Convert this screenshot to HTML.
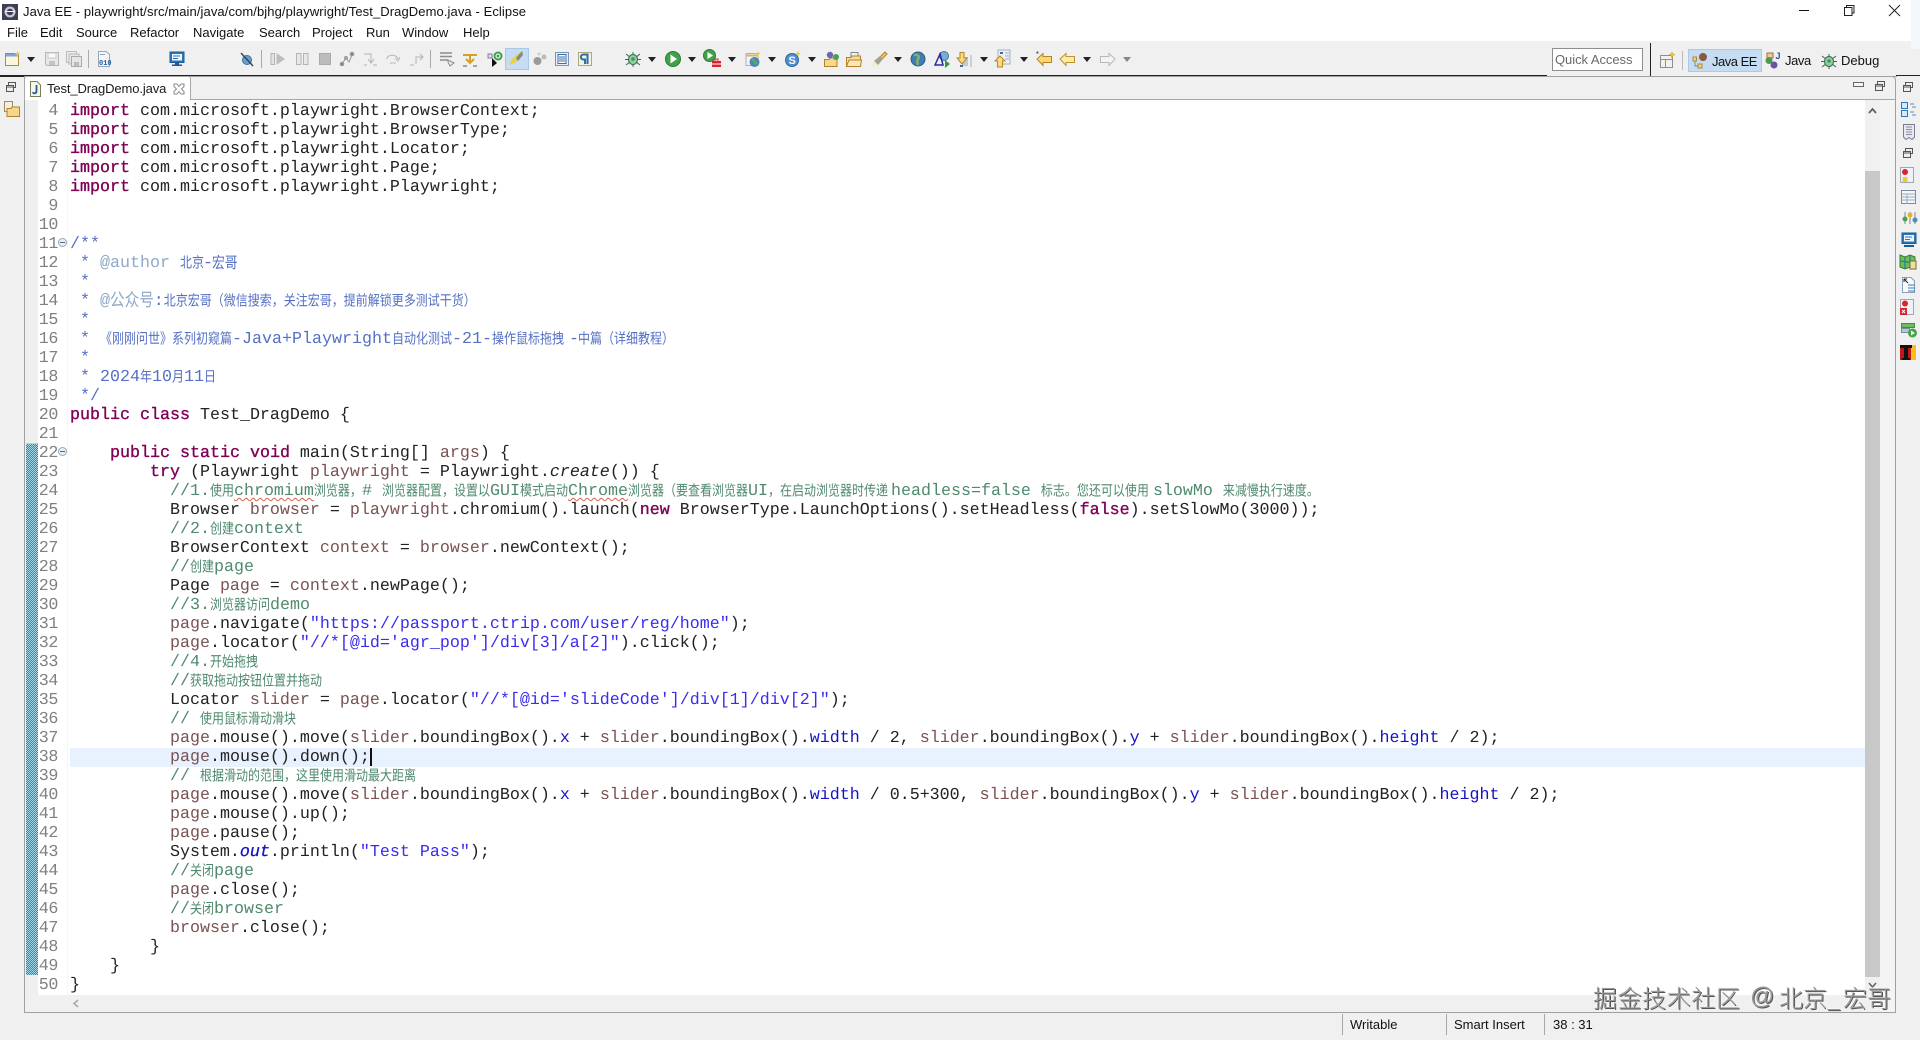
<!DOCTYPE html>
<html lang="zh"><head><meta charset="utf-8"><title>Java EE - Eclipse</title>
<style>
html,body{margin:0;padding:0;width:1920px;height:1040px;overflow:hidden;background:#f0f0f0;font-family:"Liberation Sans","Noto Sans CJK SC",sans-serif;font-size:13px;color:#111}
.p{position:absolute}
svg.i{position:absolute;width:16px;height:16px;overflow:visible}
.ar{position:absolute;top:57px;width:0;height:0;border-left:4.5px solid transparent;border-right:4.5px solid transparent;border-top:5px solid #222}
.t{position:absolute;white-space:pre;line-height:16px}
#code{position:absolute;left:70px;top:102px;font:16.67px/19px "Liberation Mono","Noto Sans CJK SC",monospace;color:#222;text-rendering:geometricPrecision}
#code div{height:19px;white-space:pre}
#nums{position:absolute;left:30px;top:102px;width:28px;text-align:right;font:16.67px/19px "Liberation Mono",monospace;color:#808080;letter-spacing:-.4px;text-rendering:geometricPrecision}
#nums div{height:19px}
b{color:#7f0055;font-weight:normal;-webkit-text-stroke:.35px #7f0055}
u{color:#7a5252;text-decoration:none}
i{color:#1414c4;font-style:normal}
s{color:#3a2cf0;text-decoration:none}
em{font-style:italic}
.m{color:#4f8a6e}.j{color:#5570c4}.g{color:#8fa9c6}
a{display:inline-block;font:12px/12px "Noto Sans CJK SC",sans-serif;transform:scaleY(1.22);transform-origin:50% 60%;white-space:pre}
.d{display:inline-block;width:8px;text-indent:-1px}
.sq{text-decoration:underline wavy #d4634a 1px;text-underline-offset:2px}
.wm{position:absolute;top:983px;font:300 24px/28px "Noto Sans CJK SC",sans-serif;color:#9a9a9a;text-shadow:1px 1px 0 #555,-1px -1px 0 #f8f8f8;white-space:pre}
</style></head><body>

<!-- title bar -->
<div class="p" style="left:0;top:0;width:1920px;height:41px;background:#fff"></div>
<div class="p" style="left:1911px;top:0;width:9px;height:49px;background:#f3f8fc"></div>
<svg class="i" style="left:2px;top:4px;width:16px;height:16px" viewBox="0 0 16 16"><rect width="16" height="16" fill="#3c3f55"/><circle cx="8" cy="8" r="5.500" fill="#c8c8d0"/><circle cx="8" cy="8" r="3.200" fill="#3c3f55"/><rect x="3" y="7" width="10" height="1" fill="#fff"/></svg>
<div class="t" style="left:23px;top:4px;letter-spacing:.09px">Java EE - playwright/src/main/java/com/bjhg/playwright/Test_DragDemo.java - Eclipse</div>
<div class="p" style="left:1799px;top:10px;width:10px;height:1px;background:#111"></div>
<svg class="i" style="left:1843px;top:3px" viewBox="0 0 16 16" fill="none" stroke="#222"><rect x="1.500" y="4.500" width="7.500" height="8"/><path d="M3.500 4.500V2.500H11V10H9"/></svg>
<svg class="i" style="left:1887px;top:2px" viewBox="0 0 16 16" fill="none" stroke="#222"><path d="M2 3L13 14M13 3L2 14"/></svg>
<!-- menu -->
<div class="t" style="left:7px;top:25px">File</div>
<div class="t" style="left:40px;top:25px">Edit</div>
<div class="t" style="left:76px;top:25px">Source</div>
<div class="t" style="left:130px;top:25px">Refactor</div>
<div class="t" style="left:193px;top:25px">Navigate</div>
<div class="t" style="left:259px;top:25px">Search</div>
<div class="t" style="left:312px;top:25px">Project</div>
<div class="t" style="left:366px;top:25px">Run</div>
<div class="t" style="left:402px;top:25px">Window</div>
<div class="t" style="left:463px;top:25px">Help</div>

<!-- toolbar line -->
<div class="p" style="left:0;top:75px;width:1547px;height:2px;background:#222"></div>
<div class="p" style="left:1896px;top:75px;width:24px;height:1px;background:#222"></div>
<div class="p" style="left:1650px;top:43px;width:1px;height:33px;background:#222"></div>
<div class="p" style="left:88px;top:50px;width:1px;height:18px;background:#aaa"></div>
<div class="p" style="left:261px;top:50px;width:1px;height:18px;background:#aaa"></div>
<div class="p" style="left:430px;top:50px;width:1px;height:18px;background:#aaa"></div>

<!-- toolbar icons -->
<svg class="i" style="left:5px;top:51px" viewBox="0 0 16 16"><rect x=".5" y="2.500" width="13" height="12" fill="#fdf6dc" stroke="#a98a45"/><rect x="1" y="3" width="12" height="2.500" fill="#7ca8d8"/><path d="M12.500 0l1 2 2 .5-2 1-1 2-1-2-2-1 2-.5z" fill="#f3c93a"/></svg>
<div class="ar" style="left:27px"></div>
<svg class="i" style="left:44px;top:51px" viewBox="0 0 16 16"><path d="M1.500 1.500H14.500V14.500H3L1.500 13z" fill="#e8e8e8" stroke="#b4b4b4"/><rect x="4" y="2" width="8" height="5" fill="#fafafa" stroke="#c8c8c8"/><rect x="5" y="10" width="6" height="4" fill="#c4c4c4"/></svg>
<svg class="i" style="left:66px;top:51px" viewBox="0 0 16 16"><rect x=".5" y=".5" width="10" height="11" fill="#ececec" stroke="#bbb"/><rect x="3" y="3" width="10" height="10" fill="#e8e8e8" stroke="#b8b8b8"/><path d="M5.500 5.500H15.500V15.500H5.500z" fill="#e6e6e6" stroke="#aaa"/><rect x="8" y="11" width="5" height="4" fill="#bbb"/></svg>
<svg class="i" style="left:97px;top:51px" viewBox="0 0 16 16"><path d="M1.500 .5H9L12.500 3.500V15.500H1.500z" fill="#f4f7fb" stroke="#9aa6b8"/><rect x="3" y="3" width="5" height="1" fill="#8da4c4"/><text x="2" y="14" font-family="Liberation Mono,monospace" font-size="7" font-weight="bold" fill="#1f5f9f">010</text></svg>
<svg class="i" style="left:169px;top:51px" viewBox="0 0 16 16"><rect x="1" y="1" width="14" height="10.500" fill="#2a78bc" stroke="#1c5a94"/><rect x="3" y="3" width="10" height="6.500" fill="#eef5fb"/><path d="M4 5H11M4 7.500H9" stroke="#2a78bc"/><rect x="6" y="12" width="4" height="1.500" fill="#1c5a94"/><rect x="3" y="13.500" width="10" height="1.500" fill="#1c5a94"/></svg>
<svg class="i" style="left:239px;top:51px" viewBox="0 0 16 16"><circle cx="8" cy="9" r="4.500" fill="#6fa0c8" stroke="#3e6f9c"/><path d="M2 2L14 15" stroke="#2a4a70" stroke-width="1.500"/></svg>
<svg class="i" style="left:270px;top:51px" viewBox="0 0 16 16"><rect x="1" y="2.500" width="3.500" height="11" fill="#e4e4e4" stroke="#b4b4b4"/><path d="M6.500 2L15 8L6.500 14z" fill="#bdbdbd"/></svg>
<svg class="i" style="left:294px;top:51px" viewBox="0 0 16 16" fill="#e8e8e8" stroke="#b4b4b4"><rect x="2.500" y="2.500" width="4.500" height="11"/><rect x="9.500" y="2.500" width="4.500" height="11"/></svg>
<svg class="i" style="left:317px;top:51px" viewBox="0 0 16 16"><rect x="2.500" y="2.500" width="11" height="11" fill="#bcbcbc" stroke="#aaa"/></svg>
<svg class="i" style="left:339px;top:51px" viewBox="0 0 16 16" fill="none" stroke="#9a9a9a"><path d="M3 13L7 7L10 11L13 4"/><circle cx="3" cy="13" r="1.800" fill="#888"/><circle cx="13" cy="3" r="1.800" fill="#888"/><circle cx="7" cy="7" r="1.500" fill="#aaa"/></svg>
<svg class="i" style="left:362px;top:51px" viewBox="0 0 16 16" fill="none" stroke="#b4b4b4"><path d="M2 3H9V11M6 8L9 12L12 8M2 14H5M11 14H15"/></svg>
<svg class="i" style="left:385px;top:51px" viewBox="0 0 16 16" fill="none" stroke="#b8b8b8"><path d="M2 8C2 3 12 3 13 8M10 7L13 10L15 6M5 12H11"/></svg>
<svg class="i" style="left:409px;top:51px" viewBox="0 0 16 16" fill="none" stroke="#b4b4b4"><path d="M7 13V6H14M11 3L14 6L11 9M1 14H5"/></svg>
<svg class="i" style="left:439px;top:51px" viewBox="0 0 16 16" fill="none" stroke="#8e8e8e" stroke-width="1.500"><path d="M1 2H13M1 5.500H13M1 9H9"/><path d="M9 9L15 12L11 15L9 11z" fill="#eee" stroke-width="1"/></svg>
<svg class="i" style="left:462px;top:51px" viewBox="0 0 16 16" fill="none"><path d="M1 4H15M8 4V11M4 8L8 12L12 8" stroke="#d9a020" stroke-width="2"/><path d="M1 15H5M11 15H15" stroke="#555"/></svg>
<svg class="i" style="left:487px;top:51px" viewBox="0 0 16 16"><circle cx="11" cy="5" r="4.500" fill="#3ea04a"/><circle cx="11" cy="5" r="2" fill="none" stroke="#fff"/><rect x="1" y="3" width="4" height="4" fill="#dde" stroke="#87a"/><path d="M5 7V16L10 12z" fill="#111"/></svg>
<div class="p" style="left:505px;top:48px;width:22px;height:20px;background:#c4dcf4;border:1px solid #a8c8e8"></div>
<svg class="i" style="left:508px;top:50px" viewBox="0 0 16 16"><path d="M1 15L4 9L11 3L15 1L14 6L7 13z" fill="#e8d24c"/><path d="M8 8L14 1L15 5L10 11z" fill="#888"/></svg>
<svg class="i" style="left:532px;top:51px" viewBox="0 0 16 16"><circle cx="5.500" cy="10" r="4" fill="#9a9a9a"/><circle cx="12" cy="6" r="2.500" fill="#bbb"/><circle cx="7" cy="3" r="1.500" fill="#ccc"/></svg>
<svg class="i" style="left:554px;top:51px" viewBox="0 0 16 16"><rect x="1.500" y="1.500" width="13" height="13" fill="#e6eef8" stroke="#7a96b8"/><rect x="4" y="3.500" width="8" height="9" fill="#fff" stroke="#3a6ea8"/><path d="M5 6H11M5 8H11M5 10H11" stroke="#3a6ea8"/></svg>
<svg class="i" style="left:577px;top:51px" viewBox="0 0 16 16"><rect x="1.500" y="1.500" width="13" height="13" fill="#f2f2e4" stroke="#b0a878"/><path d="M11.500 3.500H6.500C3 3.500 3 8.500 6.500 8.500H8V13M10.500 4V13" fill="none" stroke="#2a6ea8" stroke-width="2"/></svg>
<svg class="i" style="left:625px;top:51px" viewBox="0 0 16 16"><path d="M1 3L15 14M15 3L1 14M0 8.500H16M8 1V16" stroke="#3a6a4e"/><ellipse cx="8" cy="8.500" rx="4.500" ry="5" fill="#8cd09a" stroke="#3a6a4e"/><circle cx="8" cy="8" r="1.800" fill="#4a9060"/></svg>
<div class="ar" style="left:648px"></div>
<svg class="i" style="left:665px;top:51px" viewBox="0 0 16 16"><circle cx="8" cy="8" r="7.500" fill="#3fa34a" stroke="#2a7a36"/><path d="M5.500 3.500L12 8L5.500 12.500z" fill="#fff"/></svg>
<div class="ar" style="left:688px"></div>
<svg class="i" style="left:703px;top:49px" viewBox="0 0 16 16"><circle cx="6.500" cy="6.500" r="6" fill="#3fa34a" stroke="#2a7a36"/><path d="M4.500 3L10 6.500L4.500 10z" fill="#fff"/><rect x="9" y="12" width="9" height="6" fill="#d9252a"/><rect x="12" y="10" width="3" height="3" fill="none" stroke="#d9252a"/><path d="M9 15H18" stroke="#fff"/></svg>
<div class="ar" style="left:728px"></div>
<svg class="i" style="left:745px;top:51px" viewBox="0 0 16 16"><rect x="1" y="2.500" width="12" height="12" fill="#f2f4f8" stroke="#a8aebc"/><path d="M1 4.500H13" stroke="#d9b46a" stroke-width="2"/><circle cx="9.500" cy="11" r="5" fill="#4a86b8"/><path d="M7 9C9 8 10 12 12 13" stroke="#6aaa5a" stroke-width="2" fill="none"/><path d="M13 0l1 2 2 .5-2 1-1 2-1-2-2-1 2-.5z" fill="#f3c93a"/></svg>
<div class="ar" style="left:768px"></div>
<svg class="i" style="left:785px;top:51px" viewBox="0 0 16 16"><circle cx="7" cy="9" r="6.500" fill="#4f8fd0" stroke="#2e6aa8"/><text x="3.500" y="13" font-family="Liberation Sans,sans-serif" font-size="11" font-weight="bold" fill="#fff">S</text><path d="M13 0l1 2 2 .5-2 1-1 2-1-2-2-1 2-.5z" fill="#f3c93a"/></svg>
<div class="ar" style="left:808px"></div>
<svg class="i" style="left:824px;top:51px" viewBox="0 0 16 16"><path d="M.5 8.500H5L6 7H13V15.500H.5z" fill="#f7d78a" stroke="#b5812c"/><circle cx="6" cy="4" r="3.200" fill="#6a66b4"/><circle cx="12" cy="6" r="3" fill="#49a050"/></svg>
<svg class="i" style="left:846px;top:51px" viewBox="0 0 16 16"><rect x="5" y="1.500" width="7" height="6" fill="#eef1f5" stroke="#888"/><path d="M.5 6.500H5L6 5H14.500V15.500H.5z" fill="#f9dd9a" stroke="#b5812c"/><path d="M.5 15.500L3 9H15.500L14.500 15.500z" fill="#fbe7b4" stroke="#b5812c"/></svg>
<svg class="i" style="left:871px;top:51px" viewBox="0 0 16 16"><path d="M9 6L14 1L16 3L11 8z" fill="#f2c76a" stroke="#b5812c"/><path d="M3 10L9 5L12 8L7 14z" fill="#a8a090"/><path d="M1 16L3 10L7 14z" fill="#f7edc0"/></svg>
<div class="ar" style="left:894px"></div>
<svg class="i" style="left:910px;top:51px" viewBox="0 0 16 16"><circle cx="8" cy="8" r="7" fill="#3d7fb4" stroke="#2c5e8a"/><path d="M4 4C8 3 10 6 8 8C6 9 9 12 7 14" stroke="#86b06a" stroke-width="2.500" fill="none"/></svg>
<svg class="i" style="left:934px;top:51px" viewBox="0 0 16 16"><circle cx="10" cy="5" r="4.500" fill="#7aaed0" stroke="#44789e"/><path d="M1 14L6 3L9 14z" fill="none" stroke="#2a2aa0" stroke-width="1.500"/><path d="M11 9L16 13L11 17z" fill="#2a9a4a"/></svg>
<svg class="i" style="left:956px;top:51px" viewBox="0 0 16 16"><path d="M9 6V15" stroke="#c4c8d0" stroke-width="6"/><path d="M15 4V16" stroke="#a8b0bc"/><path d="M3 .5H7V6H10L5 12L0 6H3z" fill="#fbdc7c" stroke="#b5842a" transform="translate(1 1)"/><rect x="4" y="14" width="3" height="2" fill="#3a6ea8"/></svg>
<div class="ar" style="left:980px"></div>
<svg class="i" style="left:995px;top:49px" viewBox="0 0 16 16"><rect x="3" y="1" width="12" height="14" fill="#eef1f4" stroke="#a8b0bc"/><path d="M10 4H14M10 7H14M10 10H14" stroke="#9ab"/><rect x="5" y="3" width="3" height="2" fill="#3a6ea8"/><path d="M5 7L10 12H7.500V18H2.500V12H0z" fill="#fbdc7c" stroke="#b5842a"/></svg>
<div class="ar" style="left:1020px"></div>
<svg class="i" style="left:1036px;top:51px" viewBox="0 0 16 16"><path d="M1 8L7 2.500V5.500H15.500V11.500H7V14.500z" fill="#fbd771" stroke="#b5842a"/><text x="-1" y="6" font-family="Liberation Mono,monospace" font-size="8" fill="#444">*</text></svg>
<svg class="i" style="left:1059px;top:51px" viewBox="0 0 16 16"><path d="M1 8L7 2.500V5.500H15.500V11.500H7V14.500z" fill="#fde9a8" stroke="#c29130"/></svg>
<div class="ar" style="left:1083px"></div>
<svg class="i" style="left:1100px;top:51px" viewBox="0 0 16 16"><path d="M15 8L9 2.500V5.500H.5V11.500H9V14.500z" fill="#f4f4f4" stroke="#b8b8b8"/></svg>
<div class="ar" style="left:1123px;border-top-color:#888"></div>

<!-- quick access & perspectives -->
<div class="p" style="left:1552px;top:48px;width:89px;height:21px;background:#fff;border:1px solid #8f8f8f"></div>
<div class="t" style="left:1555px;top:52px;color:#6a6a6a;letter-spacing:-.05px">Quick Access</div>
<svg class="i" style="left:1660px;top:52px" viewBox="0 0 16 16"><rect x=".5" y="3.500" width="12" height="12" fill="#f2f2ea" stroke="#8a8f98"/><path d="M.5 7.500H12.500M5.500 7.500V15.500" stroke="#8a8f98"/><path d="M12 0l1 2 2 .5-2 1-1 3-1-3-2-1 2-.5z" fill="#f3c93a" stroke="#b58a1a" stroke-width=".4"/></svg>
<div class="p" style="left:1682px;top:51px;width:1px;height:19px;background:#bbb"></div>
<div class="p" style="left:1688px;top:49px;width:72px;height:21px;background:#c6dcf2;border:1px solid #a9cbea"></div>
<svg class="i" style="left:1692px;top:53px" viewBox="0 0 16 16"><rect x="1" y="4" width="3.500" height="4" fill="#f4d070" stroke="#a88b3c"/><rect x="6" y="11" width="4" height="4" fill="#f4d070" stroke="#a88b3c"/><path d="M3 8V13H6" fill="none" stroke="#888"/><ellipse cx="11" cy="4" rx="4" ry="4" fill="#8a5a3a" transform="rotate(40 11 4)"/></svg>
<div class="t" style="left:1712px;top:54px;letter-spacing:-.5px">Java EE</div>
<svg class="i" style="left:1765px;top:52px" viewBox="0 0 16 16"><rect x="2" y="1" width="6" height="5" fill="#f0c8a0" stroke="#a86a3a"/><circle cx="4" cy="8.500" r="3.500" fill="#4c9a4c"/><circle cx="9" cy="13" r="3.500" fill="#6a54a8"/><text x="10.500" y="7" font-family="Liberation Sans,sans-serif" font-size="9" font-weight="bold" fill="#2a4fa0">J</text></svg>
<div class="t" style="left:1785px;top:53px;letter-spacing:-.4px">Java</div>
<svg class="i" style="left:1821px;top:53px" viewBox="0 0 16 16"><path d="M1 3L15 14M15 3L1 14M0 8.500H16M8 1V16" stroke="#3a6a4e"/><ellipse cx="8" cy="8.500" rx="4.500" ry="5" fill="#8cd09a" stroke="#3a6a4e"/><circle cx="8" cy="8" r="1.800" fill="#4a9060"/></svg>
<div class="t" style="left:1841px;top:53px">Debug</div>

<!-- editor panel -->
<div class="p" style="left:24px;top:76px;width:1872px;height:937px;box-sizing:border-box;border:1px solid #a0a0a0;border-top-right-radius:4px;background:#f0f0f0"></div>
<div class="p" style="left:1547px;top:76px;width:350px;height:1px;background:#a0a0a0"></div>
<div class="p" style="left:25px;top:99px;width:1870px;height:1px;background:#a8a8a8"></div>
<div class="p" style="left:24px;top:76px;width:167px;height:24px;box-sizing:border-box;background:#fff;border:1px solid #a8a8a8;border-bottom:0;border-top-right-radius:3px;border-top-left-radius:3px"></div>
<svg class="i" style="left:27px;top:81px" viewBox="0 0 16 16"><path d="M3.500 .5H10L13.500 4V15.500H3.500z" fill="#f8f8e8" stroke="#7c7c5c"/><path d="M9.500 4V10C9.500 13 6 13 6 11" fill="none" stroke="#2a5a9a" stroke-width="1.800"/></svg>
<div class="t" style="left:47px;top:81px;color:#1a1a1a;letter-spacing:-.12px">Test_DragDemo.java</div>
<svg class="i" style="left:171px;top:81px" viewBox="0 0 16 16" fill="none" stroke="#8a8a8a"><path d="M3 3L6 3L8 5.500L10 3L13 3L13 5.500L10.500 8L13 10.500L13 13L10 13L8 10.500L6 13L3 13L3 10.500L5.500 8L3 5.500z"/></svg>
<div class="p" style="left:1853px;top:82px;width:9px;height:3px;border:1px solid #666;background:#f6f6f6"></div>
<svg class="i" style="left:1872px;top:78px" viewBox="0 0 16 16" fill="#eee" stroke="#555"><rect x="5.500" y="3.500" width="7" height="5"/><rect x="3.500" y="6.500" width="7" height="6"/><path d="M3.500 8H10.500"/></svg>

<!-- left trim -->
<svg class="i" style="left:3px;top:79px" viewBox="0 0 16 16" fill="#eee" stroke="#555"><rect x="5.500" y="3.500" width="7" height="5"/><rect x="3.500" y="6.500" width="7" height="6"/><path d="M3.500 8H10.500"/></svg>
<svg class="i" style="left:4px;top:101px" viewBox="0 0 16 16"><rect x=".5" y=".5" width="8" height="10" fill="#f4f0e0" stroke="#9a8a6a"/><path d="M3 7.500H7L8 6H15.500V15.500H3z" fill="#f5d78a" stroke="#b5812c"/></svg>

<!-- editor area -->
<div class="p" style="left:38px;top:100px;width:1842px;height:895px;background:#fff"></div>
<div class="p" style="left:25px;top:100px;width:13px;height:895px;background:#efefef"></div>
<div class="p" style="left:67px;top:100px;width:1px;height:895px;background:#f6f6f6"></div>
<div class="p" style="left:26px;top:443px;width:12px;height:532px;background:repeating-conic-gradient(#2190b8 0 25%,#a4d8e8 0 50%) 0 0/2px 2px;border-top:1px solid #9fdcf0;box-sizing:border-box"></div>
<div class="p" style="left:70px;top:748px;width:1795px;height:19px;background:#e8f2fe"></div>
<div class="p" style="left:370px;top:748px;width:2px;height:18px;background:#111"></div>

<!-- scrollbars -->
<div class="p" style="left:1865px;top:100px;width:15px;height:895px;background:#f0f0f0"></div>
<div class="p" style="left:1880px;top:100px;width:15px;height:912px;background:#f4f4f4"></div>
<div class="p" style="left:1865px;top:171px;width:15px;height:806px;background:#c8c8c8"></div>
<svg class="i" style="left:1866px;top:105px;width:13px;height:12px" viewBox="0 0 13 12" fill="none" stroke="#606060" stroke-width="1.800"><path d="M3 8L6.500 4L10 8"/></svg>
<svg class="i" style="left:1866px;top:979px;width:13px;height:12px" viewBox="0 0 13 12" fill="none" stroke="#606060" stroke-width="1.500"><path d="M3 4L6.500 8L10 4"/></svg>
<div class="p" style="left:25px;top:995px;width:1855px;height:17px;background:#f0f0f0"></div>
<svg class="i" style="left:70px;top:997px;width:12px;height:13px" viewBox="0 0 12 13" fill="none" stroke="#a8a8a8" stroke-width="1.500"><path d="M8 3L4 6.500L8 10"/></svg>

<!-- fold markers -->
<svg class="i" style="left:58px;top:238px;width:9px;height:9px" viewBox="0 0 9 9"><circle cx="4.500" cy="4.500" r="4" fill="#e6edf3" stroke="#9aa8b4"/><path d="M2 4.500H7" stroke="#5a6a7a"/></svg>
<svg class="i" style="left:58px;top:447px;width:9px;height:9px" viewBox="0 0 9 9"><circle cx="4.500" cy="4.500" r="4" fill="#e6edf3" stroke="#9aa8b4"/><path d="M2 4.500H7" stroke="#5a6a7a"/></svg>

<!-- line numbers -->
<div id="nums"><div>4</div><div>5</div><div>6</div><div>7</div><div>8</div><div>9</div><div>10</div><div>11</div><div>12</div><div>13</div><div>14</div><div>15</div><div>16</div><div>17</div><div>18</div><div>19</div><div>20</div><div>21</div><div>22</div><div>23</div><div>24</div><div>25</div><div>26</div><div>27</div><div>28</div><div>29</div><div>30</div><div>31</div><div>32</div><div>33</div><div>34</div><div>35</div><div>36</div><div>37</div><div>38</div><div>39</div><div>40</div><div>41</div><div>42</div><div>43</div><div>44</div><div>45</div><div>46</div><div>47</div><div>48</div><div>49</div><div>50</div></div>

<!-- code -->
<div id="code">
<div><b>import</b> com.microsoft.playwright.BrowserContext;</div>
<div><b>import</b> com.microsoft.playwright.BrowserType;</div>
<div><b>import</b> com.microsoft.playwright.Locator;</div>
<div><b>import</b> com.microsoft.playwright.Page;</div>
<div><b>import</b> com.microsoft.playwright.Playwright;</div>
<div></div>
<div></div>
<div class="j">/**</div>
<div class="j"> * <span class="g">@author</span> <a>北京</a><span class="d">-</span><a style="font-size:12.800px">宏哥</a></div>
<div class="j"> *</div>
<div class="j"> * <span class="g">@<a style="font-size:14.600px">公众号</a></span>:<a>北京宏哥（微信搜索，关注宏哥，提前解锁更多测试干货）</a></div>
<div class="j"> *</div>
<div class="j"> * <a>《刚刚问世》系列初窥篇</a>-Java+Playwright<a>自动化测试</a>-21-<a>操作鼠标拖拽</a><span style="display:inline-block;width:6px"></span><span class="d">-</span><a>中篇（详细教程）</a></div>
<div class="j"> *</div>
<div class="j"> * 2024<a>年</a>10<a>月</a>11<a>日</a></div>
<div class="j"> */</div>
<div><b>public</b> <b>class</b> Test_DragDemo {</div>
<div></div>
<div>    <b>public</b> <b>static</b> <b>void</b> main(String[] <u>args</u>) {</div>
<div>        <b>try</b> (Playwright <u>playwright</u> = Playwright.<em>create</em>()) {</div>
<div class="m">          //1.<a>使用</a><span class="sq">chromium</span><a>浏览器，</a># <a>浏览器配置，设置以</a>GUI<a>模式启动</a><span class="sq">Chrome</span><a>浏览器（要查看浏览器</a>UI<a>，在启动浏览器时传递</a><span style="display:inline-block;width:3px"></span>headless=false <a>标志。您还可以使用</a><span style="display:inline-block;width:4px"></span>slowMo <a>来减慢执行速度。</a></div>
<div>          Browser <u>browser</u> = <u>playwright</u>.chromium().launch(<b>new</b> BrowserType.LaunchOptions().setHeadless(<b>false</b>).setSlowMo(3000));</div>
<div class="m">          //2.<a>创建</a>context</div>
<div>          BrowserContext <u>context</u> = <u>browser</u>.newContext();</div>
<div class="m">          //<a>创建</a>page</div>
<div>          Page <u>page</u> = <u>context</u>.newPage();</div>
<div class="m">          //3.<a>浏览器访问</a>demo</div>
<div>          <u>page</u>.navigate(<s>"https://passport.ctrip.com/user/reg/home"</s>);</div>
<div>          <u>page</u>.locator(<s>"//*[@id='agr_pop']/div[3]/a[2]"</s>).click();</div>
<div class="m">          //4.<a>开始拖拽</a></div>
<div class="m">          //<a>获取拖动按钮位置并拖动</a></div>
<div>          Locator <u>slider</u> = <u>page</u>.locator(<s>"//*[@id='slideCode']/div[1]/div[2]"</s>);</div>
<div class="m">          // <a>使用鼠标滑动滑块</a></div>
<div>          <u>page</u>.mouse().move(<u>slider</u>.boundingBox().<i>x</i> + <u>slider</u>.boundingBox().<i>width</i> / 2, <u>slider</u>.boundingBox().<i>y</i> + <u>slider</u>.boundingBox().<i>height</i> / 2);</div>
<div>          <u>page</u>.mouse().down();</div>
<div class="m">          // <a>根据滑动的范围，这里使用滑动最大距离</a></div>
<div>          <u>page</u>.mouse().move(<u>slider</u>.boundingBox().<i>x</i> + <u>slider</u>.boundingBox().<i>width</i> / 0.5+300, <u>slider</u>.boundingBox().<i>y</i> + <u>slider</u>.boundingBox().<i>height</i> / 2);</div>
<div>          <u>page</u>.mouse().up();</div>
<div>          <u>page</u>.pause();</div>
<div>          System.<i style="-webkit-text-stroke:.3px #1414c4;font-style:italic">out</i>.println(<s>"Test Pass"</s>);</div>
<div class="m">          //<a>关闭</a>page</div>
<div>          <u>page</u>.close();</div>
<div class="m">          //<a>关闭</a>browser</div>
<div>          <u>browser</u>.close();</div>
<div>        }</div>
<div>    }</div>
<div>}</div>
</div>

<!-- right trim -->
<svg class="i" style="left:1900px;top:79px" viewBox="0 0 16 16" fill="#eee" stroke="#555"><rect x="5.500" y="3.500" width="7" height="5"/><rect x="3.500" y="6.500" width="7" height="6"/><path d="M3.500 8H10.500"/></svg>
<svg class="i" style="left:1901px;top:101px" viewBox="0 0 16 16"><rect x=".5" y="1.500" width="6" height="6" fill="#d8e8f8" stroke="#2a78bc"/><rect x=".5" y="9.500" width="6" height="6" fill="#d8e8f8" stroke="#2a78bc"/><path d="M9 3H13M11 6H15M9 11H13M11 14H15" stroke="#5a8ac0"/></svg>
<svg class="i" style="left:1901px;top:124px" viewBox="0 0 16 16"><path d="M2.500 .5H13.500V13L11 15.500L8 13.500L5 15.500L2.500 13z" fill="#e8e8f4" stroke="#7a7a90"/><path d="M5 3H11M5 5.500H11M5 8H11M5 10.500H11" stroke="#8a8aa0"/></svg>
<svg class="i" style="left:1900px;top:145px" viewBox="0 0 16 16" fill="#eee" stroke="#555"><rect x="5.500" y="3.500" width="7" height="5"/><rect x="3.500" y="6.500" width="7" height="6"/><path d="M3.500 8H10.500"/></svg>
<svg class="i" style="left:1900px;top:167px" viewBox="0 0 16 16"><rect x=".5" y=".5" width="13" height="15" fill="#eef2f6" stroke="#9aa8b8"/><circle cx="5" cy="5" r="3" fill="#d9252a"/><rect x="2.500" y="10" width="5" height="5" fill="#f3c93a"/></svg>
<svg class="i" style="left:1901px;top:189px" viewBox="0 0 16 16"><rect x=".5" y="1.500" width="14" height="13" fill="#f4f6fa" stroke="#7a8aa0"/><path d="M.5 5H14.500M6 5V14.500M.5 8H14.500M.5 11H14.500" stroke="#9aaac0"/></svg>
<svg class="i" style="left:1902px;top:210px" viewBox="0 0 16 16"><path d="M3 2V14M8 2V14M13 2V14" stroke="#888"/><circle cx="3" cy="9" r="2.500" fill="#4aa04a"/><circle cx="8" cy="5" r="2.500" fill="#e8b030"/><circle cx="13" cy="10" r="2.500" fill="#4a8ac0"/></svg>
<svg class="i" style="left:1901px;top:232px" viewBox="0 0 16 16"><rect x="1" y="1" width="14" height="10.500" fill="#2a78bc" stroke="#1c5a94"/><rect x="3" y="3" width="10" height="6.500" fill="#eef5fb"/><path d="M4 5H11M4 7.500H9" stroke="#2a78bc"/><rect x="3" y="13" width="10" height="2" fill="#1c5a94"/></svg>
<svg class="i" style="left:1900px;top:254px" viewBox="0 0 16 16"><path d="M0 1L5 3L10 1L15 3V15L10 13L5 15L0 13z" fill="#6fc04a" stroke="#3a7a2a"/><path d="M5 3V15M10 1V13M0 7L15 9" stroke="#1f7ab0" stroke-width="1.200"/><rect x="10" y="7" width="6" height="8" fill="#f0e0a0" stroke="#7a6a30"/></svg>
<svg class="i" style="left:1901px;top:277px" viewBox="0 0 16 16"><path d="M1.500 .5H10L13.500 4V15.500H1.500z" fill="#f8fafc" stroke="#8aa0b8"/><path d="M3 2L7 6M3 2V5M3 2H6" stroke="#223" fill="none"/><path d="M7 8H14M7 11H14M7 14H14" stroke="#3a7ab0"/></svg>
<svg class="i" style="left:1900px;top:299px" viewBox="0 0 16 16"><rect x=".5" y=".5" width="13" height="15" fill="#eef2f6" stroke="#9aa8b8"/><circle cx="5" cy="4.500" r="3" fill="#d9252a"/><rect x="0" y="9" width="7" height="7" fill="#d9252a"/><path d="M2 11L5 14M5 11L2 14" stroke="#fff"/></svg>
<svg class="i" style="left:1901px;top:322px" viewBox="0 0 16 16"><rect x=".5" y="1.500" width="13" height="4" fill="#6abf5a" stroke="#4a8a3a"/><rect x=".5" y="6.500" width="8" height="4" fill="#b8c8d8" stroke="#7a8a9a"/><circle cx="11.500" cy="11" r="4.500" fill="#3fa34a"/><path d="M10 8.500L14 11L10 13.500z" fill="#fff"/></svg>
<svg class="i" style="left:1900px;top:344px" viewBox="0 0 16 16"><rect x="0" y="1" width="16" height="15" fill="#f3c020"/><rect x="0" y="1" width="11" height="15" fill="#c01818"/><rect x="0" y="1" width="12" height="3" fill="#111"/><rect x="4" y="1" width="4" height="15" fill="#111"/><rect x="2" y="14" width="8" height="2" fill="#111"/></svg>

<!-- status bar -->
<div class="p" style="left:1342px;top:1014px;width:1px;height:21px;background:#a8a8a8"></div>
<div class="p" style="left:1446px;top:1014px;width:1px;height:21px;background:#a8a8a8"></div>
<div class="p" style="left:1544px;top:1014px;width:1px;height:21px;background:#a8a8a8"></div>
<div class="t" style="left:1350px;top:1017px">Writable</div>
<div class="t" style="left:1454px;top:1017px">Smart Insert</div>
<div class="t" style="left:1553px;top:1017px">38 : 31</div>

<!-- watermark -->
<div class="wm" style="left:1593px;letter-spacing:.6px">掘金技术社区</div>
<div class="wm" style="left:1750px;font-family:'Liberation Sans',sans-serif">@</div>
<div class="wm" style="left:1779px">北京</div>
<div class="wm" style="left:1827px">_</div>
<div class="wm" style="left:1843px">宏哥</div>
</body></html>
